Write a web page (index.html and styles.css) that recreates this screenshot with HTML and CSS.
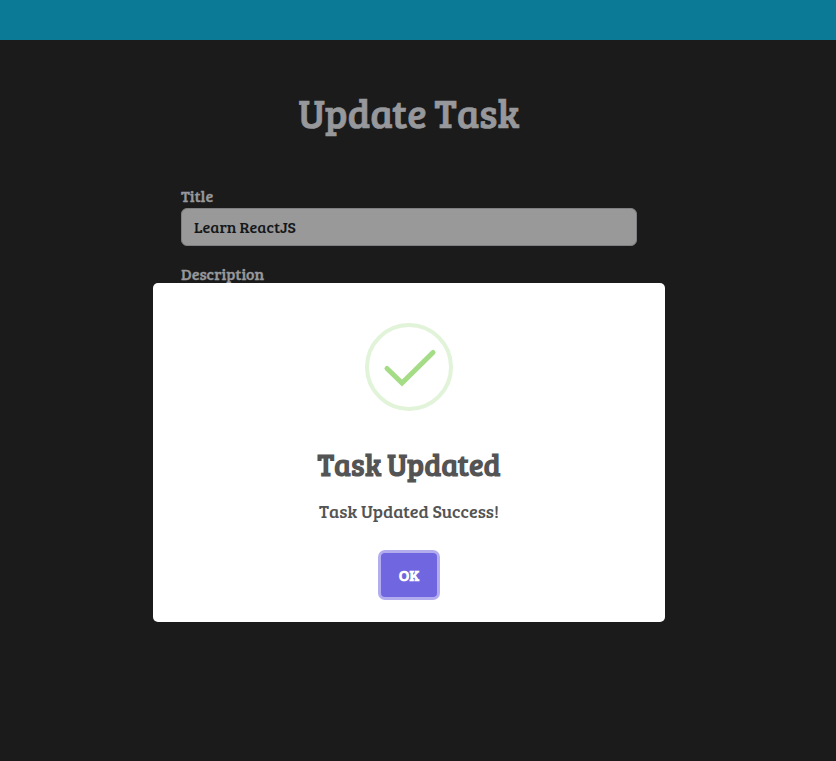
FILE: index.html
```html
<!DOCTYPE html>
<html lang="en">
<head>
<meta charset="utf-8">
<title>Update Task</title>
<link rel="stylesheet" href="styles.css">
</head>
<body>
<header class="navbar"></header>
<main class="page">
  <h1 class="heading">Update Task</h1>
  <form class="form">
    <label class="label" for="title">Title</label>
    <input class="input" id="title" type="text" value="Learn ReactJS">
    <label class="label label-description">Description</label>
  </form>
</main>
<div class="overlay">
  <section class="modal" role="dialog">
    <svg class="icon" viewBox="0 0 88 88" width="88" height="88" fill="none">
      <circle cx="44" cy="44" r="42" stroke="#e1f3d8" stroke-width="4"/>
      <path d="M22 45.500 37 60 68 29.500" stroke="#a5dc86" stroke-width="5" stroke-linecap="round"/>
    </svg>
    <h2 class="modal-title">Task Updated</h2>
    <p class="modal-text">Task Updated Success!</p>
    <button class="confirm" type="button">OK</button>
  </section>
</div>
</body>
</html>
```
FILE: styles.css
```css
* { box-sizing: border-box; }
body {
  margin: 0;
  height: 761px;
  overflow: hidden;
  background: #1b1b1b;
  color: #97989b;
  font-family: "Bree Serif", "DejaVu Serif Condensed", "DejaVu Serif", serif;
}
.navbar { height: 40px; background: #0a7a96; }
.page { width: 818px; padding-top: 47px; }
.heading {
  margin: 0;
  height: 99px;
  font-size: 40px;
  line-height: 50px;
  font-weight: 500;
  text-align: center;
  -webkit-text-stroke: 0.7px;
}
.form { width: 456px; margin: 0 auto; display: flex; flex-direction: column; }
.label { height: 22px; font-size: 16px; line-height: 20px; font-weight: 400; -webkit-text-stroke: 0.3px; }
.label-description { margin-top: 18px; }
.input {
  height: 38px;
  padding: 0 12px 2px;
  border: 1px solid #7e8083;
  border-radius: 6px;
  background: #999;
  color: #14171a;
  font-family: inherit;
  font-size: 16px;
}
.overlay { position: absolute; top: 283px; left: 153px; }
.modal {
  width: 512px;
  height: 339px;
  padding-top: 40px;
  border-radius: 5px;
  background: #fff;
  color: #545454;
  display: flex;
  flex-direction: column;
  align-items: center;
}
.icon { flex: none; }
.modal-title { margin: 33px 0 0; font-size: 30px; line-height: 40px; font-weight: 700; white-space: nowrap; }
.modal-text { margin: 15px 0 0; font-size: 18px; line-height: 24px; white-space: nowrap; }
.confirm {
  width: 56px;
  height: 44px;
  margin-top: 30px;
  padding: 0 0 2px;
  border: 0;
  border-radius: 4px;
  background: #7066e0;
  box-shadow: 0 0 0 3px #b3adf0;
  color: #fff;
  font-family: inherit;
  font-size: 16px;
  font-weight: 700;
}
```
